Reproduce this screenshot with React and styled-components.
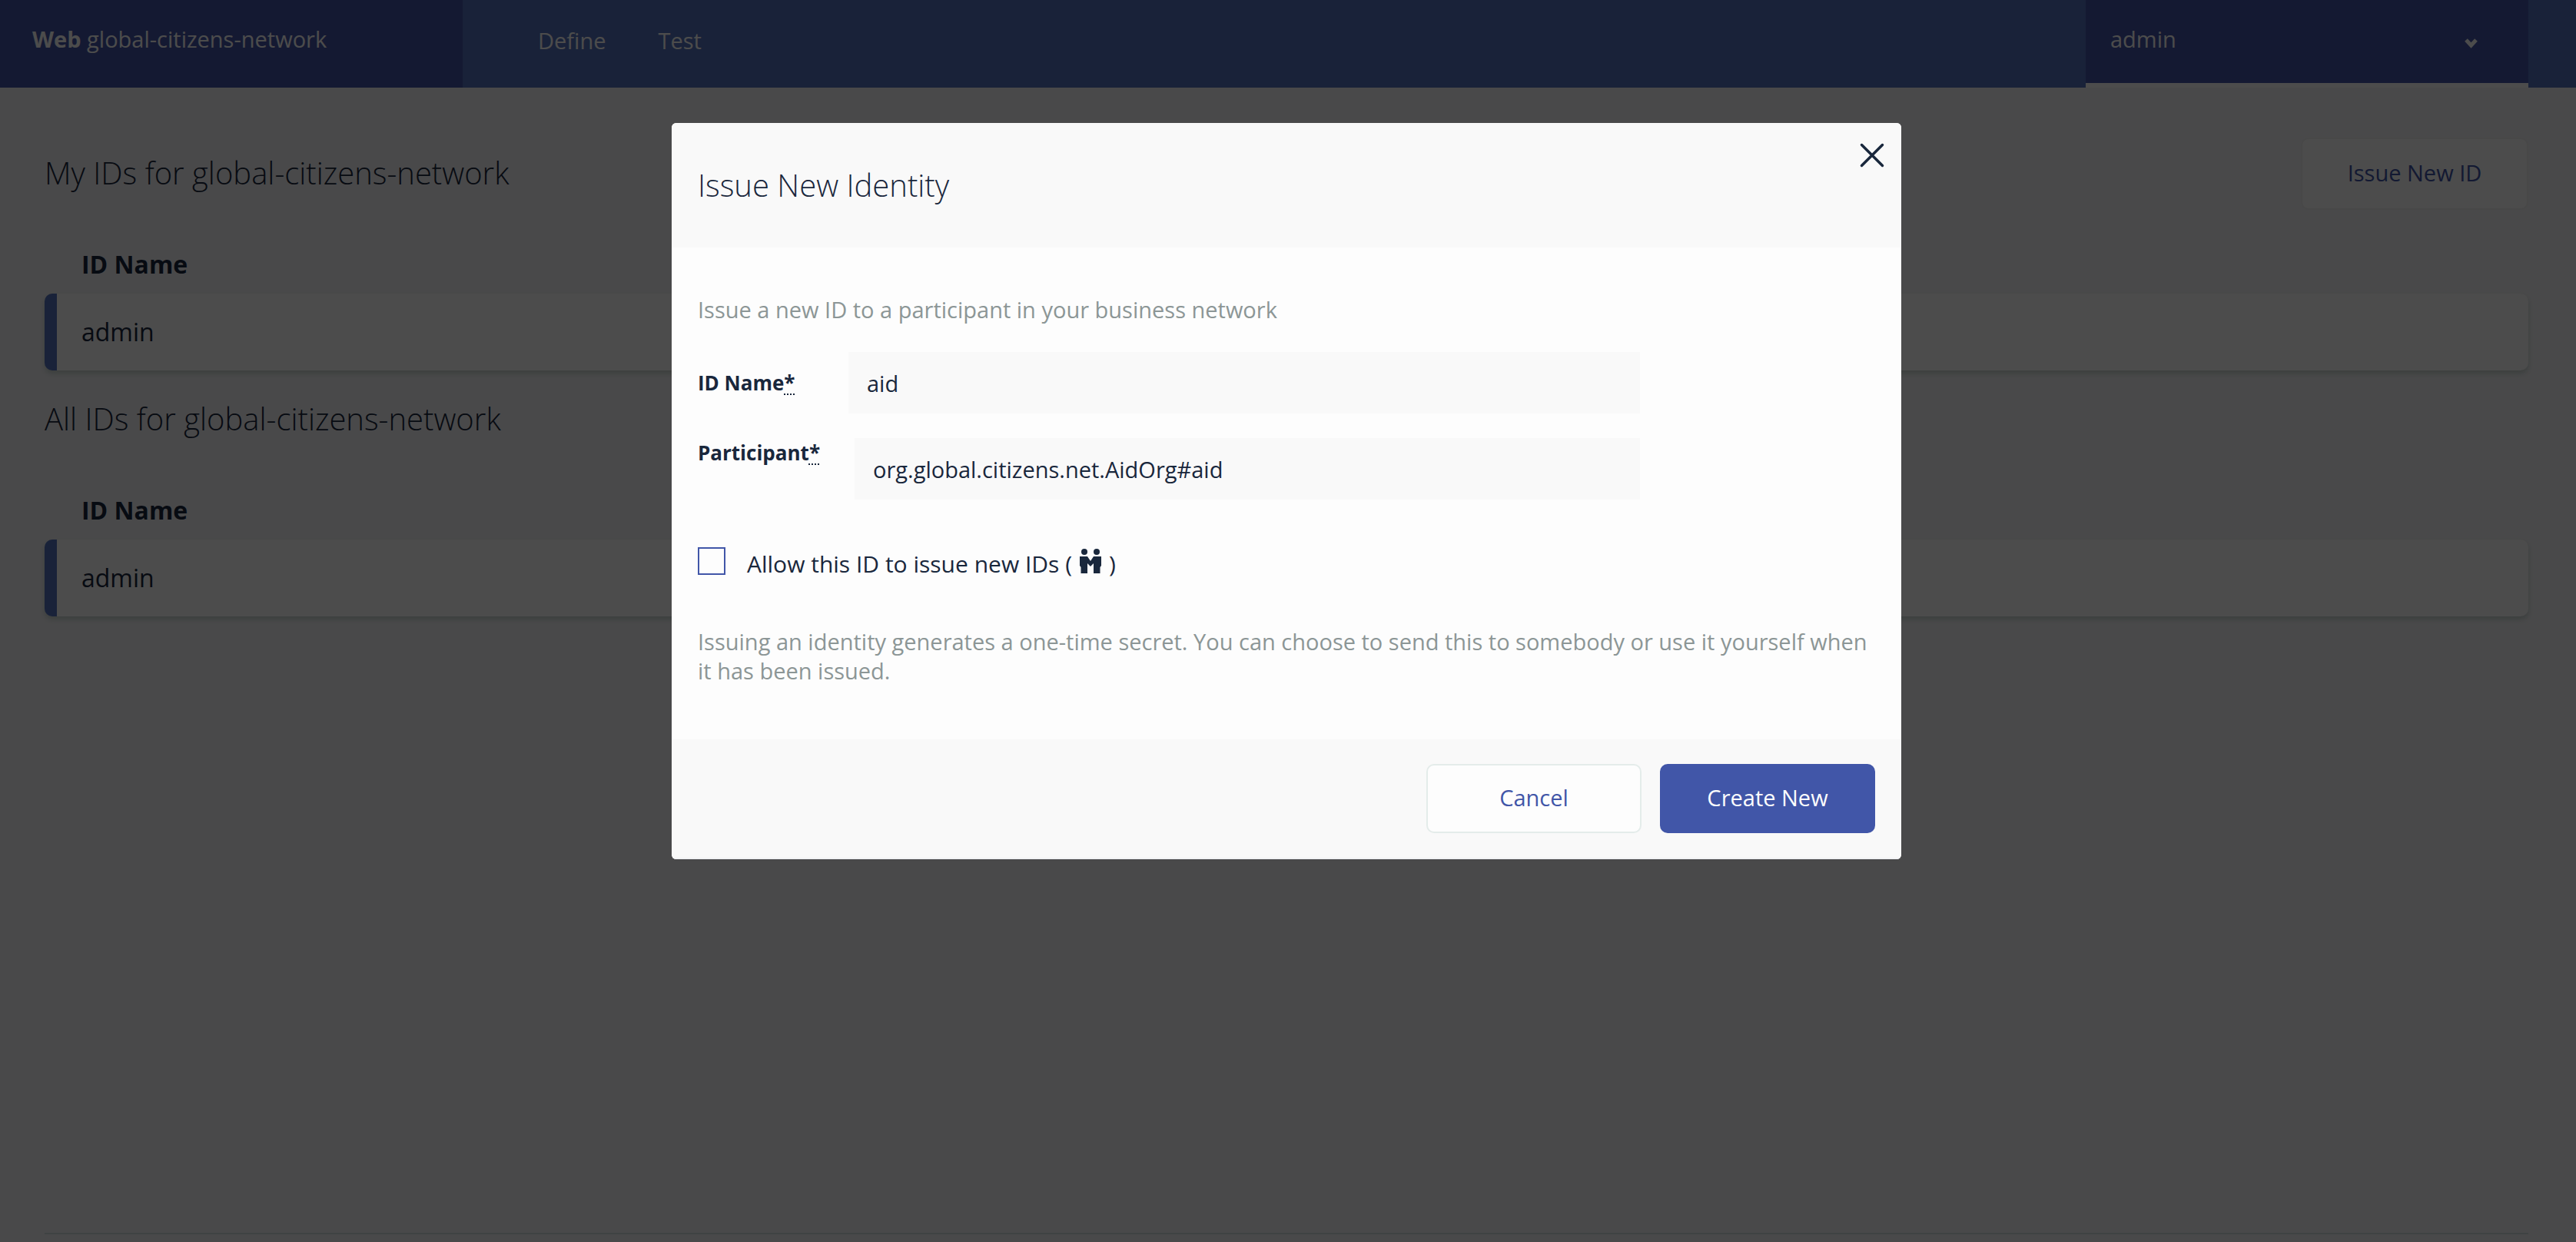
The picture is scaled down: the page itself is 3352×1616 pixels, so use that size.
import React, { useState } from "react";
import styled, { createGlobalStyle, css } from "styled-components";

const GlobalStyle = createGlobalStyle`
  *, *::before, *::after { box-sizing: border-box; }
  body {
    margin: 0;
    background: #f4f4f7;
    color: #19273c;
    font-family: "Open Sans", sans-serif;
    font-size: 29px;
    line-height: 38px;
  }
  h1, h2, p { margin: 0; }
  button, input { font: inherit; color: inherit; }
`;

const Page = styled.div`
  min-height: 100vh;
  display: flex;
  flex-direction: column;
`;

const TopBar = styled.header`
  height: 114px;
  display: flex;
  background: #5673be;
  color: #fdfdfd;
`;

const Brand = styled.div`
  width: 602px;
  padding: 32px 42px;
  background: #4555a8;
`;

const Nav = styled.nav`
  flex: 1;
  display: flex;
  gap: 68px;
  padding: 34px 98px;
`;

const NavLink = styled.a`
  color: inherit;
  text-decoration: none;
`;

const UserMenu = styled.button`
  width: 576px;
  margin-right: 62px;
  padding: 32px 64px 0 32px;
  display: flex;
  align-items: flex-start;
  justify-content: space-between;
  border: 0;
  border-bottom: 6px solid #fdfdfd;
  background: #4555a8;
  text-align: left;
`;

const Main = styled.main`
  flex: 1;
  display: flex;
  flex-direction: column;
  padding: 66px 62px 10px 58px;
`;

const Section = styled.section`
  margin-bottom: 18px;
`;

const SectionHead = styled.div`
  height: 92px;
  display: flex;
  align-items: center;
  justify-content: space-between;
`;

const Title = styled.h2`
  padding-bottom: 2px;
  font-size: 40px;
  font-weight: 300;
  line-height: 54px;
`;

const IdTable = styled.table`
  width: 100%;
  border-collapse: separate;
  border-spacing: 0;
  font-size: 32px;
  line-height: 44px;
  text-align: left;

  th {
    height: 110px;
    padding: 34px 48px 0;
    font-weight: 700;
    vertical-align: middle;
  }

  td {
    height: 100px;
    padding: 0 32px;
    background: #fdfdfd;
    border-left: 16px solid #5673be;
    border-radius: 10px;
    box-shadow: 0 4px 6px #c8d4d0;
  }
`;

const Footer = styled.footer`
  margin-top: auto;
  border-top: 2px solid #d2e2e2;
`;

const Button = styled.button`
  height: ${(p) => (p.$wide ? "94px" : "90px")};
  min-width: ${(p) => (p.$wide ? "296px" : "280px")};
  padding: 0 6px 2px;
  border: 2px solid ${(p) => (p.$wide ? "#f0f0f2" : "#e4ecea")};
  border-radius: 10px;
  background: #fdfdfd;
  color: #4156a8;
  ${(p) =>
    p.$primary &&
    css`
      border-color: #4156a8;
      background: #4156a8;
      color: #fdfdfd;
    `}
`;

const Backdrop = styled.div`
  position: fixed;
  inset: 0;
  display: flex;
  align-items: flex-start;
  justify-content: center;
  padding-top: 160px;
  padding-right: 4px;
  background: rgba(0, 0, 0, 0.7);
`;

const Dialog = styled.form`
  width: 1600px;
  border-radius: 6px;
  overflow: hidden;
  background: #fdfdfd;
`;

const DialogHead = styled.div`
  height: 162px;
  display: flex;
  align-items: flex-start;
  justify-content: space-between;
  padding: 22px 18px 0 34px;
  background: #f9f9f9;
`;

const DialogTitle = styled.h1`
  padding-top: 32px;
  font-size: 40px;
  font-weight: 300;
  line-height: 54px;
`;

const CloseButton = styled.button`
  display: flex;
  padding: 0;
  border: 0;
  background: none;
`;

const DialogBody = styled.div`
  padding: 62px 34px 70px;
`;

const Hint = styled.p`
  color: #8c9696;
`;

const Field = styled.div`
  display: flex;
  align-items: ${(p) => (p.$top ? "flex-start" : "center")};
  width: 1226px;
  margin-top: ${(p) => (p.$top ? "32px" : "36px")};
`;

const FieldLabel = styled.label`
  width: ${(p) => (p.$wide ? "204px" : "196px")};
  font-size: 26px;
  font-weight: 700;
  line-height: 38px;
`;

const Required = styled.abbr`
  text-decoration: underline dotted 2px;
  text-underline-offset: 4px;
`;

const TextInput = styled.input`
  flex: 1;
  height: 80px;
  padding: 0 24px;
  border: 0;
  background: #f9f9f9;
`;

const CheckRow = styled.div`
  display: flex;
  align-items: flex-start;
  gap: 28px;
  margin: 62px 0;
`;

const CheckBox = styled.input`
  appearance: none;
  width: 36px;
  height: 36px;
  margin: 0;
  border: 2px solid #4156a8;
  background: #fdfdfd;
`;

const CheckLabel = styled.label`
  display: flex;
  gap: 8px;
  padding-top: 2px;
  font-size: 30px;
  line-height: 40px;
`;

const DialogFoot = styled.div`
  display: flex;
  justify-content: flex-end;
  gap: 24px;
  padding: 32px 34px;
  background: #f9f9f9;
  border-bottom: 2px solid #f0f1f3;
`;

const Chevron = () => (
  <svg width="24" height="38" viewBox="0 0 24 38" aria-hidden="true">
    <path d="M7 20l6.5 7 6.5-7" fill="none" stroke="#fdfdfd" strokeWidth="5" />
  </svg>
);

const CloseIcon = () => (
  <svg width="40" height="40" viewBox="0 0 40 40" aria-hidden="true">
    <path d="M6.5 6.5l27 27M33.5 6.5l-27 27" stroke="#19273c" strokeWidth="3.5" strokeLinecap="round" />
  </svg>
);

const PeopleIcon = () => (
  <svg width="32" height="36" viewBox="0 0 32 36" fill="#19273c" aria-hidden="true">
    <circle cx="8" cy="4" r="4" />
    <circle cx="24" cy="4" r="4" />
    <path d="M2 10h10l4 6 4-6h10v12l-1.500 2v8h-8.500V19l-4 4-4-4v13H3.500v-8l-1.500-2z" />
  </svg>
);

function IdList({ title, ids, action }) {
  return (
    <Section>
      <SectionHead>
        <Title>{title}</Title>
        {action}
      </SectionHead>
      <IdTable>
        <thead>
          <tr><th scope="col">ID Name</th></tr>
        </thead>
        <tbody>
          {ids.map((id) => (
            <tr key={id}><td>{id}</td></tr>
          ))}
        </tbody>
      </IdTable>
    </Section>
  );
}

export default function App() {
  const [name, setName] = useState("aid");
  const [participant, setParticipant] = useState("org.global.citizens.net.AidOrg#aid");
  return (
    <>
      <GlobalStyle />
      <Page>
        <TopBar>
          <Brand><b>Web</b> global-citizens-network</Brand>
          <Nav>
            <NavLink href="#define">Define</NavLink>
            <NavLink href="#test">Test</NavLink>
          </Nav>
          <UserMenu type="button">admin<Chevron /></UserMenu>
        </TopBar>
        <Main>
          <IdList
            title="My IDs for global-citizens-network"
            ids={["admin"]}
            action={<Button type="button" $wide>Issue New ID</Button>}
          />
          <IdList title="All IDs for global-citizens-network" ids={["admin"]} />
          <Footer />
        </Main>
      </Page>
      <Backdrop>
        <Dialog role="dialog" aria-labelledby="dialog-title" onSubmit={(e) => e.preventDefault()}>
          <DialogHead>
            <DialogTitle id="dialog-title">Issue New Identity</DialogTitle>
            <CloseButton type="button" aria-label="Close"><CloseIcon /></CloseButton>
          </DialogHead>
          <DialogBody>
            <Hint>Issue a new ID to a participant in your business network</Hint>
            <Field>
              <FieldLabel htmlFor="id-name">ID Name<Required>*</Required></FieldLabel>
              <TextInput id="id-name" value={name} onChange={(e) => setName(e.target.value)} />
            </Field>
            <Field $top>
              <FieldLabel htmlFor="participant" $wide>Participant<Required>*</Required></FieldLabel>
              <TextInput id="participant" value={participant} onChange={(e) => setParticipant(e.target.value)} />
            </Field>
            <CheckRow>
              <CheckBox type="checkbox" id="allow" />
              <CheckLabel htmlFor="allow">Allow this ID to issue new IDs ( <PeopleIcon /> )</CheckLabel>
            </CheckRow>
            <Hint>
              Issuing an identity generates a one-time secret. You can choose to send this to somebody or use it yourself when it has been issued.
            </Hint>
          </DialogBody>
          <DialogFoot>
            <Button type="button">Cancel</Button>
            <Button type="submit" $primary>Create New</Button>
          </DialogFoot>
        </Dialog>
      </Backdrop>
    </>
  );
}
